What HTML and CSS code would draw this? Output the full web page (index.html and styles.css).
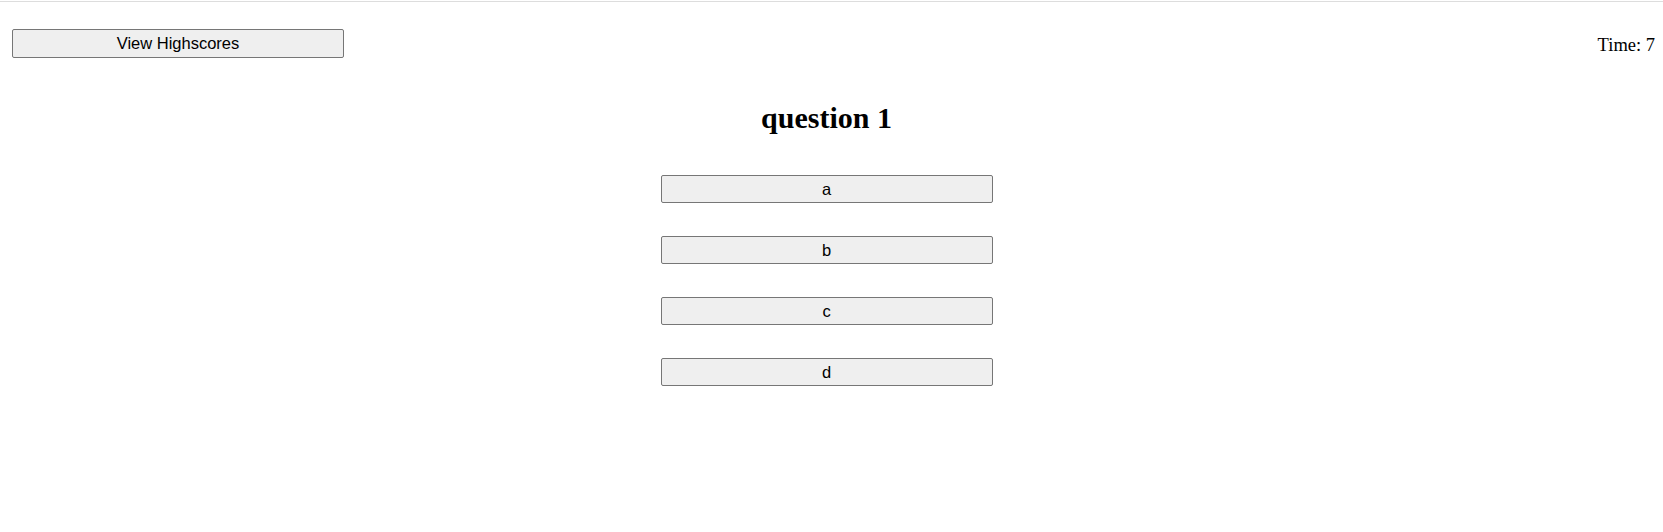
FILE: index.html
```html
<!DOCTYPE html>
<html lang="en">
<head>
<meta charset="utf-8">
<title>Quiz</title>
<link rel="stylesheet" href="styles.css">
</head>
<body>
<div class="topline"></div>
<div class="page">
  <header class="header">
    <button class="btn btn-scores">View Highscores</button>
    <div class="timer">Time: 7</div>
  </header>
  <main class="quiz">
    <h2 class="question">question 1</h2>
    <div class="answers">
      <button class="btn btn-answer">a</button>
      <button class="btn btn-answer">b</button>
      <button class="btn btn-answer">c</button>
      <button class="btn btn-answer">d</button>
    </div>
  </main>
</div>
</body>
</html>
```

FILE: styles.css
```css
html, body {
  margin: 0;
  padding: 0;
  background: #ffffff;
}
body {
  font-family: "Liberation Serif", "Times New Roman", serif;
  color: #000;
}
.topline {
  margin-top: 1px;
  height: 1px;
  background: #dddddd;
}
.page {
  padding: 0 8px 0 12px;
}
.header {
  display: flex;
  justify-content: space-between;
  align-items: flex-start;
  margin-top: 27px;
}
.btn {
  box-sizing: border-box;
  font-family: "Liberation Sans", Arial, sans-serif;
  font-size: 16.5px;
  color: #000;
  background: #efefef;
  border: 1px solid #767676;
  border-radius: 2px;
  padding: 0;
  width: 332px;
  margin: 0;
}
.btn-scores {
  height: 29px;
}
.timer {
  font-size: 18.5px;
  line-height: 20px;
  margin-top: 6px;
}
.quiz {
  display: flex;
  flex-direction: column;
  align-items: center;
  margin-left: -12px;
  margin-right: 2px;
}
.question {
  font-size: 30px;
  line-height: 33px;
  font-weight: bold;
  margin: 43px 0 0 0;
}
.answers {
  display: flex;
  flex-direction: column;
  align-items: center;
  gap: 33px;
  margin-top: 41px;
}
.btn-answer {
  height: 28px;
}
```
